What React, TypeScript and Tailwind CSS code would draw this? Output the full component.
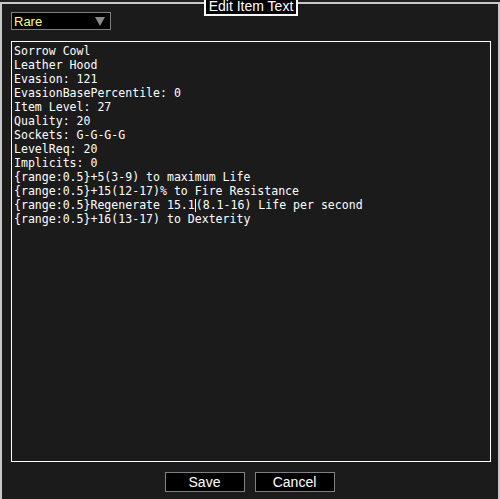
import React from 'react';

const lines = [
    'Sorrow Cowl',
    'Leather Hood',
    'Evasion: 121',
    'EvasionBasePercentile: 0',
    'Item Level: 27',
    'Quality: 20',
    'Sockets: G-G-G-G',
    'LevelReq: 20',
    'Implicits: 0',
    '{range:0.5}+5(3-9) to maximum Life',
    '{range:0.5}+15(12-17)% to Fire Resistance',
];

export default function App() {
    return (
        <div className="relative w-[500px] h-[499px] overflow-hidden bg-[#202020] font-['Liberation_Sans',sans-serif]">
            {/* Frame */}
            <div className="mt-[2px] h-[497px] border-l-2 border-t-2 border-r-2 border-[#c8c8c8] bg-[#1b1b1b] flex flex-col">
                {/* Rarity dropdown */}
                <div className="ml-[9px] mt-[8px] w-[100px] h-[18px] bg-black border border-[#808080] flex items-center justify-between px-[2px]">
                    <span className="text-[#ffff70] text-[13px] leading-none">Rare</span>
                    <svg width="10" height="10" viewBox="0 0 10 10" className="mr-[3px]">
                        <polygon points="0,1 10,1 5,10" fill="#8a8a8a" />
                    </svg>
                </div>

                {/* Item text area */}
                <div className="ml-[9px] mt-[11px] w-[480px] h-[421px] border border-white bg-[#1b1b1b] px-[2px] pt-[2px] font-['DejaVu_Sans_Mono',monospace] text-[11.55px] leading-[14px] text-white whitespace-pre">
                    {lines.map((l, i) => (
                        <div key={i}>{l}</div>
                    ))}
                    <div>
                        {'{range:0.5}Regenerate 15.1'}
                        <span className="inline-block w-px h-[13px] bg-white align-[-3px]" />
                        {'(8.1-16) Life per second'}
                    </div>
                    <div>{'{range:0.5}+16(13-17) to Dexterity'}</div>
                </div>

                {/* Buttons */}
                <div className="mt-[10px] flex justify-center gap-[10px] pr-[1px]">
                    <button className="w-[80px] h-[20px] bg-black border border-[#808080] text-white text-[14px] leading-none">
                        Save
                    </button>
                    <button className="w-[80px] h-[20px] bg-black border border-[#808080] text-white text-[14px] leading-none">
                        Cancel
                    </button>
                </div>
            </div>

            {/* Title tab */}
            <div className="absolute left-[204px] top-[-5px] w-[94px] h-[21px] bg-black border-2 border-white flex items-center justify-center">
                <span className="text-white text-[14px] leading-none">Edit Item Text</span>
            </div>
        </div>
    );
}
